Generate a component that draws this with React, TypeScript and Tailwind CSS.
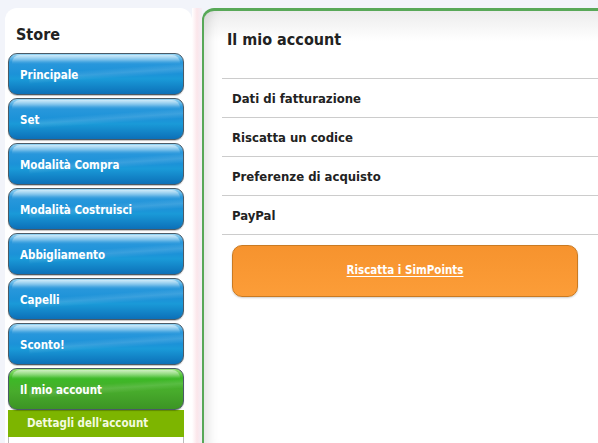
import React from 'react';

const blueItems = ['Principale', 'Set', 'Modalità Compra', 'Modalità Costruisci', 'Abbigliamento', 'Capelli', 'Sconto!'];
const accountLinks = ['Dati di fatturazione', 'Riscatta un codice', 'Preferenze di acquisto', 'PayPal'];

const font = { fontFamily: '"DejaVu Sans Condensed", "DejaVu Sans", sans-serif' };

const GlossyButton = ({ label, green }: { label: string; green?: boolean }) => (
  <div
    className={
      'relative h-[42px] rounded-[9px] border border-[#4a5a66] overflow-hidden flex items-center pl-[11px] pt-[3px] shadow-[0_1px_1px_rgba(0,0,0,0.25)] ' +
      (green
        ? 'bg-[linear-gradient(180deg,#9ae27c_0%,#3cba26_22%,#48ac2c_55%,#3c9424_100%)]'
        : 'bg-[linear-gradient(180deg,#9ad6f4_0%,#2a98dc_20%,#1c92d8_50%,#1a9ad8_62%,#0c70b8_100%)]')
    }
  >
    <div className="absolute left-[3px] right-[3px] top-[1px] h-[9px] rounded-t-[8px] bg-[linear-gradient(180deg,rgba(255,255,255,0.55),rgba(255,255,255,0))]" />
    <div className="absolute left-[20px] right-[-20px] top-[14px] h-[10px] rotate-[-4deg] bg-[linear-gradient(180deg,rgba(255,255,255,0),rgba(255,255,255,0.12),rgba(255,255,255,0))]" />
    <span className="relative text-white text-[11.5px] font-bold">{label}</span>
  </div>
);

export default function App() {
  return (
    <div style={font} className="w-[598px] h-[443px] overflow-hidden bg-[#f2f4fa] flex pt-[8px]">
      <div className="ml-[5px] w-[187px] bg-white rounded-t-[12px] flex flex-col px-[3px]">
        <h1 className="pl-[8px] pt-[16px] pb-[7px] text-[16px] font-bold text-[#222] leading-[22px]">Store</h1>
        <div className="w-[176px] flex flex-col gap-[3px]">
          {blueItems.map((l) => (
            <GlossyButton key={l} label={l} />
          ))}
          <div className="flex flex-col">
            <GlossyButton label="Il mio account" green />
            <div className="h-[27px] bg-[#7db500] flex items-center pl-[19px] text-[11.5px] font-bold text-[#f4fbe0]">
              Dettagli dell'account
            </div>
            <div className="h-[20px] bg-white border-x border-[#bbb]" />
          </div>
        </div>
      </div>
      <div className="w-[10px] bg-[linear-gradient(90deg,#ffffff_0%,#fbe6ea_50%,#f4eef6_100%)]" />
      <div className="flex-1 border-l-[2px] border-t-[3px] border-[#58a858] rounded-tl-[12px] bg-white shadow-[inset_14px_0_12px_-10px_rgba(0,0,0,0.12)] bg-[linear-gradient(180deg,#ececec_0%,#ffffff_30px)] flex flex-col pl-[18px]">
        <h2 className="pl-[5px] h-[67px] flex items-center pb-[10px] text-[16px] font-bold text-[#222]">Il mio account</h2>
        <div className="flex flex-col border-t border-[#cccccc]">
          {accountLinks.map((l) => (
            <div key={l} className="h-[39px] border-b border-[#cccccc] flex items-center pl-[10px] pt-[1px] text-[13px] font-bold text-[#222]">
              {l}
            </div>
          ))}
        </div>
        <div className="mt-[10px] ml-[10px] w-[346px] h-[52px] rounded-[10px] border border-[#c97a22] bg-[linear-gradient(180deg,#f6932e,#fc9d38)] flex items-center justify-center shadow-[0_1px_2px_rgba(0,0,0,0.2)]">
          <span className="text-white text-[11.5px] font-bold underline underline-offset-2">Riscatta i SimPoints</span>
        </div>
      </div>
    </div>
  );
}
